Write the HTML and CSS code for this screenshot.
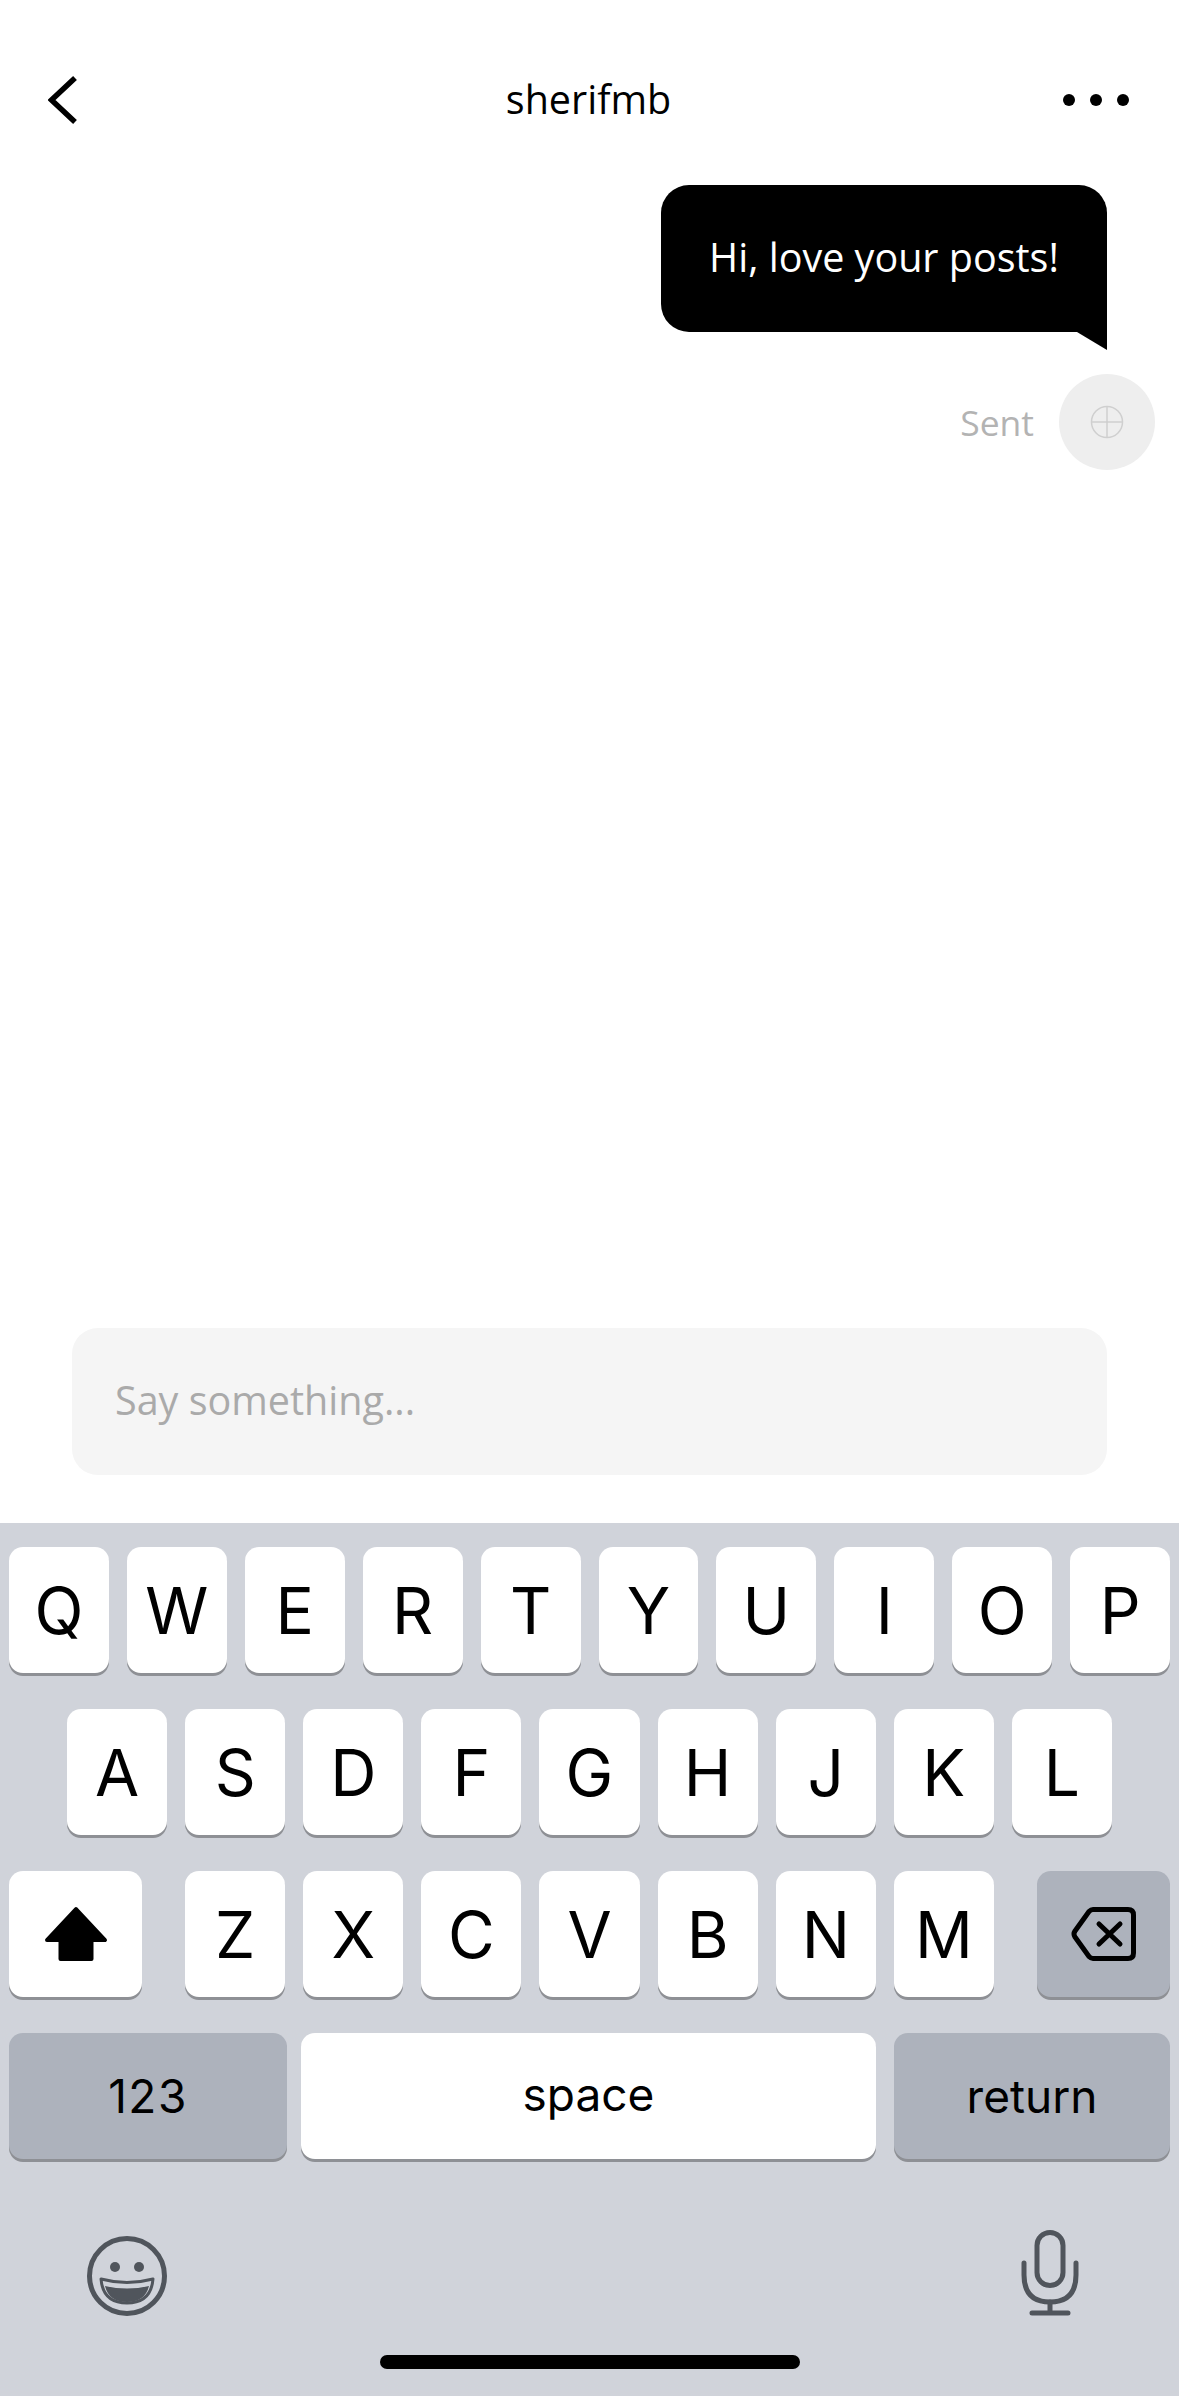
FILE: index.html
```html
<!DOCTYPE html>
<html lang="en">
  <head>
    <meta charset="UTF-8" />
    <meta name="viewport" content="width=device-width, initial-scale=1.0" />
    <title>sherifmb</title>
    <link rel="stylesheet" href="styles.css">
  </head>
  <body>
    <div class="screen">
      <div class="header">
        <svg class="back" width="30" height="48" viewBox="0 0 30 48">
          <path d="M27 2 L3.500 24 L27 46" fill="none" stroke="#000" stroke-width="5.500" />
        </svg>
        <div class="title">sherifmb</div>
        <svg class="more" width="66" height="12" viewBox="0 0 66 12">
          <circle cx="6" cy="6" r="6" />
          <circle cx="33" cy="6" r="6" />
          <circle cx="60" cy="6" r="6" />
        </svg>
      </div>

      <div class="messages">
        <div class="bubble">Hi, love your posts!</div>
        <div class="status">
          <span class="status-text">Sent</span>
          <div class="avatar">
            <svg width="34" height="34" viewBox="0 0 34 34">
              <circle cx="17" cy="17" r="15.500" fill="none" stroke="#cfcfcf" stroke-width="1.500" />
              <path d="M17 1.500 V32.500 M1.500 17 H32.500" stroke="#cfcfcf" stroke-width="1.500" />
            </svg>
          </div>
        </div>
      </div>

      <div class="input">Say something...</div>

      <div class="keyboard">
        <div class="row">
          <div class="key">Q</div>
          <div class="key">W</div>
          <div class="key">E</div>
          <div class="key">R</div>
          <div class="key">T</div>
          <div class="key">Y</div>
          <div class="key">U</div>
          <div class="key">I</div>
          <div class="key">O</div>
          <div class="key">P</div>
        </div>
        <div class="row row-middle">
          <div class="key">A</div>
          <div class="key">S</div>
          <div class="key">D</div>
          <div class="key">F</div>
          <div class="key">G</div>
          <div class="key">H</div>
          <div class="key">J</div>
          <div class="key">K</div>
          <div class="key">L</div>
        </div>
        <div class="row row-shift">
          <div class="key key-side">
            <svg width="66" height="56" viewBox="0 0 66 56">
              <path d="M33 3 L62 34 H48.500 V53 H17.500 V34 H4 Z" fill="#000" stroke="#000" stroke-width="4" stroke-linejoin="round" />
            </svg>
          </div>
          <div class="letters">
            <div class="key">Z</div>
            <div class="key">X</div>
            <div class="key">C</div>
            <div class="key">V</div>
            <div class="key">B</div>
            <div class="key">N</div>
            <div class="key">M</div>
          </div>
          <div class="key key-side key-gray">
            <svg width="66" height="56" viewBox="0 0 66 56">
              <path d="M22 3.500 H57 Q62.500 3.500 62.500 9 V47 Q62.500 52.500 57 52.500 H22 Q20 52.500 18 50.500 L4 31 Q2 28 4 25 L18 5.500 Q20 3.500 22 3.500 Z" fill="none" stroke="#000" stroke-width="5" stroke-linejoin="round" />
              <path d="M28 18 L49 38 M49 18 L28 38" fill="none" stroke="#000" stroke-width="5" stroke-linecap="round" />
            </svg>
          </div>
        </div>
        <div class="row row-bottom">
          <div class="key key-gray key-num">123</div>
          <div class="key key-space">space</div>
          <div class="key key-gray key-return">return</div>
        </div>

        <div class="tools">
          <svg width="80" height="80" viewBox="0 0 80 80">
            <circle cx="40" cy="40" r="37.500" fill="none" stroke="#50555c" stroke-width="5" />
            <circle cx="28" cy="31" r="5" fill="#50555c" />
            <circle cx="52" cy="31" r="5" fill="#50555c" />
            <path d="M14 43 Q40 50 66 43 Q64 67 40 67 Q16 67 14 43 Z" fill="none" stroke="#50555c" stroke-width="3" stroke-linejoin="round" />
            <path d="M18 50 Q40 55 62 50 Q58 66 40 66 Q22 66 18 50 Z" fill="#50555c" />
          </svg>
          <svg width="58" height="86" viewBox="0 0 58 86">
            <rect x="16" y="2.500" width="26" height="53" rx="13" fill="none" stroke="#50555c" stroke-width="5" />
            <path d="M3 33 V45 Q3 72 29 72 Q55 72 55 45 V33" fill="none" stroke="#50555c" stroke-width="5" stroke-linecap="round" />
            <path d="M29 72 V83 M11 83 H47" fill="none" stroke="#50555c" stroke-width="5" stroke-linecap="round" />
          </svg>
        </div>

        <div class="home-bar"></div>
      </div>
    </div>
  </body>
</html>
```

FILE: styles.css
```css
body {
  margin: 0;
  background: #fff;
  font-family: "Open Sans", Arial, sans-serif;
}

.screen {
  width: 1179px;
  height: 2396px;
  display: flex;
  flex-direction: column;
  overflow: hidden;
}

.header {
  height: 80px;
  margin-top: 60px;
  padding: 0 50px 0 48px;
  display: flex;
  align-items: center;
  justify-content: space-between;
}

.title {
  flex: 1;
  margin-left: 36px;
  padding-bottom: 2px;
  text-align: center;
  font-size: 39.500px;
  color: #000;
}

.messages {
  flex: 1;
  padding: 45px 24px 0 0;
  display: flex;
  flex-direction: column;
  align-items: flex-end;
}

.bubble {
  position: relative;
  width: 446px;
  height: 147px;
  box-sizing: border-box;
  padding-bottom: 4px;
  margin-right: 48px;
  display: flex;
  align-items: center;
  justify-content: center;
  background: #000;
  color: #fff;
  font-size: 39.500px;
  border-radius: 28px 28px 0 28px;
}

.bubble::after {
  content: "";
  position: absolute;
  right: 0;
  top: 100%;
  width: 30px;
  height: 18px;
  background: #000;
  clip-path: polygon(0 0, 100% 0, 100% 100%);
}

.status {
  margin-top: 42px;
  display: flex;
  align-items: center;
  gap: 25px;
}

.status-text {
  font-size: 35.500px;
  color: #b3b3b3;
}

.avatar {
  width: 96px;
  height: 96px;
  border-radius: 50%;
  background: #eee;
  display: flex;
  align-items: center;
  justify-content: center;
}

.input {
  height: 147px;
  box-sizing: border-box;
  margin: 0 72px 48px;
  padding: 0 0 4px 43px;
  display: flex;
  align-items: center;
  background: #f5f5f5;
  border-radius: 26px;
  color: #aaa;
  font-size: 39.500px;
}

.keyboard {
  height: 873px;
  box-sizing: border-box;
  padding-top: 24px;
  background: #d0d3da;
  font-family: Inter, Arial, sans-serif;
}

.row {
  height: 126px;
  margin-bottom: 36px;
  padding: 0 9px;
  display: flex;
  gap: 18px;
}

.row-middle {
  padding: 0 67px;
}

.row-shift {
  gap: 43px;
}

.letters {
  flex: 1;
  display: flex;
  gap: 18px;
}

.key {
  flex: 1;
  display: flex;
  align-items: center;
  justify-content: center;
  background: #fff;
  border-radius: 14px;
  box-shadow: 0 3px 0 #8e9095;
  color: #000;
  font-size: 64px;
}

.key-side {
  flex: 0 0 133px;
}

.key-gray {
  background: #adb2bc;
}

.key-num,
.key-space,
.key-return {
  font-size: 46px;
}

.key-space {
  padding-bottom: 5px;
}

.key-num {
  flex: 0 0 278px;
  letter-spacing: 1.500px;
}

.row-bottom {
  gap: 14px;
}

.key-return {
  flex: 0 0 276px;
  margin-left: 4px;
}

.tools {
  margin-top: 71px;
  padding: 0 100px 0 87px;
  display: flex;
  align-items: flex-end;
  justify-content: space-between;
}

.home-bar {
  width: 420px;
  height: 14px;
  margin: 39px auto 0;
  border-radius: 7px;
  background: #000;
}
```
